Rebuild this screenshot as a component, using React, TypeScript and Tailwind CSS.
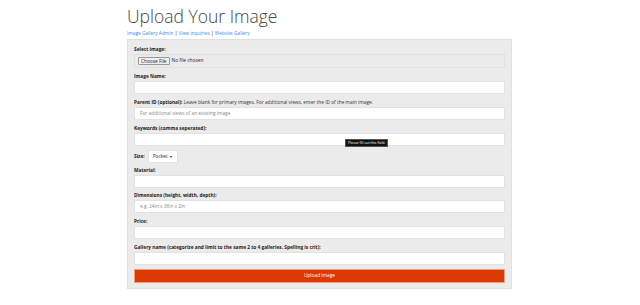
import React from "react";

const font = { fontFamily: '"Open Sans", "Noto Sans", sans-serif' };

function Label({ children }: { children: React.ReactNode }) {
  return <div className="text-[4.8px] font-bold text-[#222] leading-[6px] mb-[2px]">{children}</div>;
}

function Input({ placeholder }: { placeholder?: string }) {
  return (
    <div className="h-[13px] bg-white border border-[#e2e2e2] px-[5px] flex items-center text-[4.8px] text-[#888]">
      {placeholder}
    </div>
  );
}

export default function App() {
  return (
    <div className="w-[640px] h-[305px] bg-white" style={font}>
      <div className="pl-[127px] pt-[5px] w-[512px]">
        <h1 className="text-[17.5px] font-light text-[#444] leading-[22px]">Upload Your Image</h1>
        <div className="mt-[3px] text-[4.8px] text-[#3a8ee6] leading-[6px]">
          <span>Image Gallery Admin</span>
          <span className="text-[#222]"> | </span>
          <span>View inquiries</span>
          <span className="text-[#222]"> | </span>
          <span>Website Gallery</span>
        </div>
        <div className="mt-[3px] bg-[#ebebeb] border border-[#e0e0e0] px-[6px] pt-[6px] pb-[5px] flex flex-col">
          <Label>Select image:</Label>
          <div className="h-[14px] border border-[#e0e0e0] flex items-center px-[3px] gap-[2px]">
            <span className="text-[4.8px] text-[#222] bg-[#efefef] border border-[#999] rounded-[1px] px-[2px] leading-[6px]">Choose File</span>
            <span className="text-[4.8px] text-[#222]">No file chosen</span>
          </div>
          <div className="mt-[5px]"><Label>Image Name:</Label></div>
          <Input />
          <div className="mt-[5px]">
            <div className="text-[4.8px] text-[#333] leading-[6px] mb-[2px] whitespace-nowrap">
              <b className="text-[#222]">Parent ID (optional):</b> Leave blank for primary images. For additional views, enter the ID of the main image.
            </div>
          </div>
          <Input placeholder="For additional views of an existing image" />
          <div className="mt-[5px]"><Label>Keywords (comma seperated):</Label></div>
          <div className="relative">
            <Input />
            <div className="absolute left-[211px] top-[6px] bg-[#111] border border-[#555] text-white text-[3.5px] px-[2px] leading-[6px] whitespace-nowrap">
              Please fill out this field.
            </div>
          </div>
          <div className="mt-[4px] flex items-center gap-[3px]">
            <span className="text-[4.8px] font-bold text-[#222]">Size:</span>
            <div className="w-[30px] h-[13px] bg-white border border-[#e2e2e2] flex items-center justify-between px-[4px] text-[4.8px] text-[#222]">
              <span>Pocket</span>
              <span className="text-[3.5px]">▼</span>
            </div>
          </div>
          <div className="mt-[4px]"><Label>Material:</Label></div>
          <Input />
          <div className="mt-[4px]"><Label>Dimensions (height, width, depth):</Label></div>
          <Input placeholder="e.g. 24in x 36in x 2in" />
          <div className="mt-[5px]"><Label>Price:</Label></div>
          <Input />
          <div className="mt-[5px]"><Label>Gallery name (categorize and limit to the same 2 to 4 galleries. Spelling is crit):</Label></div>
          <Input />
          <div className="mt-[4px] h-[14px] bg-[#dc3800] border border-[#e8a080] flex items-center justify-center text-white text-[4.8px]">
            Upload Image
          </div>
        </div>
      </div>
    </div>
  );
}
